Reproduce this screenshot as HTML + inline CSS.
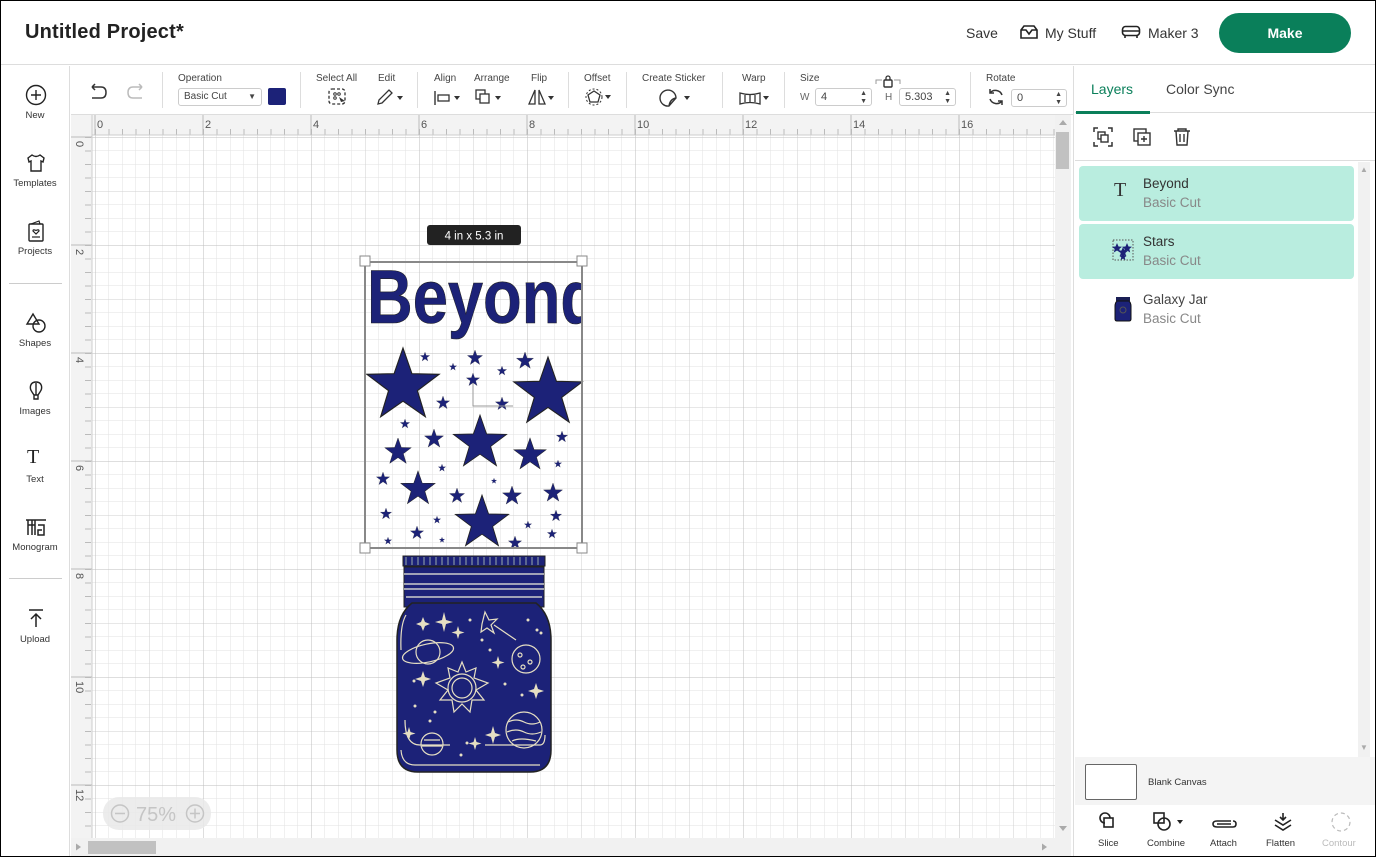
<!DOCTYPE html>
<html><head><meta charset="utf-8"><style>
*{box-sizing:border-box;margin:0;padding:0}
body{width:1376px;height:857px;overflow:hidden;background:#fff;font-family:"Liberation Sans",sans-serif;color:#333;position:relative}
.abs{position:absolute}
.frame{position:absolute;left:0;top:0;width:1376px;height:857px;border:1px solid #000;pointer-events:none;z-index:50}
.lbl{font-size:10px;color:#444;position:absolute;white-space:nowrap}
.side{font-size:9.5px;color:#333;position:absolute;width:70px;text-align:center;left:0}
.sep{position:absolute;width:1px;background:#ddd;top:72px;height:36px}
.inp{position:absolute;border:1px solid #ccc;border-radius:3px;background:#fff;font-size:11px;color:#444;padding-left:5px;line-height:16px;height:18px}
</style></head><body>
<div class="frame"></div>
<div class="abs" style="left:0;top:0;width:1376px;height:65px;border-bottom:1px solid #ddd;background:#fff"></div>
<div class="abs" style="left:25px;top:21px;font-size:20px;font-weight:bold;color:#222;letter-spacing:0.2px">Untitled Project*</div>
<div class="abs" style="left:966px;top:25px;font-size:14px;color:#333">Save</div>
<svg class="abs" style="left:1019px;top:24px" width="20" height="16" viewBox="0 0 20 16"><path d="M2 6 L2 14 L18 14 L18 6 L15 2 L5 2 Z M2 6 L7 6 L10 10 L13 6 L18 6" fill="none" stroke="#222" stroke-width="1.6"/></svg>
<div class="abs" style="left:1045px;top:25px;font-size:14px;color:#333">My Stuff</div>
<svg class="abs" style="left:1121px;top:25px" width="20" height="14" viewBox="0 0 20 14"><rect x="1.5" y="1.5" width="17" height="9" rx="3" fill="none" stroke="#222" stroke-width="1.6"/><path d="M1.5 6 H18.5 M4 10.5 V13 M16 10.5 V13" stroke="#222" stroke-width="1.6"/></svg>
<div class="abs" style="left:1148px;top:25px;font-size:14px;color:#333">Maker 3</div>
<div class="abs" style="left:1219px;top:13px;width:132px;height:40px;border-radius:20px;background:#0a7f5a;color:#fff;font-size:14px;font-weight:bold;text-align:center;line-height:40px">Make</div>

<div class="abs" style="left:0;top:66px;width:70px;height:791px;border-right:1px solid #ddd;background:#fff"></div>
<svg class="abs" style="left:25px;top:84px" width="22" height="22" viewBox="0 0 22 22"><circle cx="11" cy="11" r="9.5" fill="none" stroke="#222" stroke-width="1.4"/><path d="M11 6V16M6 11H16" stroke="#222" stroke-width="1.4"/></svg>
<div class="side" style="top:110px">New</div>
<svg class="abs" style="left:26px;top:153px" width="20" height="20" viewBox="0 0 20 20"><path d="M6 2 L2 5 L3 9 L5 8 L5 18 L15 18 L15 8 L17 9 L18 5 L14 2 Q10 5 6 2Z" fill="none" stroke="#222" stroke-width="1.4"/></svg>
<div class="side" style="top:178px">Templates</div>
<svg class="abs" style="left:27px;top:220px" width="18" height="22" viewBox="0 0 18 22"><rect x="2" y="4" width="14" height="17" rx="1" fill="none" stroke="#222" stroke-width="1.4"/><path d="M4 4 L12 1 L13 4" fill="none" stroke="#222" stroke-width="1.2"/><path d="M9 14 L6 11 Q6 9 9 10.5 Q12 9 12 11Z" fill="none" stroke="#222" stroke-width="1.2"/><path d="M5 17H13" stroke="#222" stroke-width="1.2"/></svg>
<div class="side" style="top:246px">Projects</div>
<div class="abs" style="left:9px;top:283px;width:53px;height:1px;background:#ccc"></div>
<svg class="abs" style="left:25px;top:312px" width="22" height="22" viewBox="0 0 22 22"><path d="M8 2 L2 12 L14 12Z" fill="none" stroke="#222" stroke-width="1.4"/><circle cx="14" cy="14" r="6" fill="none" stroke="#222" stroke-width="1.4"/></svg>
<div class="side" style="top:338px">Shapes</div>
<svg class="abs" style="left:27px;top:380px" width="18" height="22" viewBox="0 0 18 22"><path d="M9 2 C3 2 2 8 5 12 L7 15 H11 L13 12 C16 8 15 2 9 2Z M7 15 V19 H11 V15 M9 3 V15" fill="none" stroke="#222" stroke-width="1.4"/></svg>
<div class="side" style="top:406px">Images</div>
<div class="abs" style="left:27px;top:446px;font-family:'Liberation Serif',serif;font-size:20px;color:#222">T</div>
<div class="side" style="top:474px">Text</div>
<svg class="abs" style="left:24px;top:517px" width="24" height="20" viewBox="0 0 24 20"><path d="M2 3 H22 M4 3 V18 M8 3 V18 M4 8 H11 M11 3 V18 M14 8 H20 V18 H14 V13 H18" fill="none" stroke="#222" stroke-width="1.5"/></svg>
<div class="side" style="top:542px">Monogram</div>
<div class="abs" style="left:9px;top:578px;width:53px;height:1px;background:#ccc"></div>
<svg class="abs" style="left:27px;top:608px" width="18" height="20" viewBox="0 0 18 20"><path d="M2 2 H16 M9 6 V19 M4 11 L9 6 L14 11" fill="none" stroke="#222" stroke-width="1.5"/></svg>
<div class="side" style="top:634px">Upload</div>

<div class="abs" style="left:71px;top:66px;width:1003px;height:49px;background:#fff;border-bottom:1px solid #ddd"></div>
<svg class="abs" style="left:87px;top:83px" width="60" height="18" viewBox="0 0 60 18"><path d="M5 4 H14 Q19 4 19 9.5 Q19 15 14 15 H5 M5 4 L8 1 M5 4 L8 7" fill="none" stroke="#333" stroke-width="1.5"/><path d="M55 4 H46 Q41 4 41 9.5 Q41 15 46 15 H55 M55 4 L52 1 M55 4 L52 7" fill="none" stroke="#bbb" stroke-width="1.5"/></svg>
<div class="sep" style="left:162px"></div>
<div class="lbl" style="left:178px;top:73px">Operation</div>
<div class="inp" style="left:178px;top:88px;width:84px;font-size:10px">Basic Cut<span style="position:absolute;right:5px;font-size:8px">▼</span></div>
<div class="abs" style="left:268px;top:88px;width:18px;height:17px;background:#1c2278;border-radius:2px"></div>
<div class="sep" style="left:300px"></div>
<div class="lbl" style="left:316px;top:73px">Select All</div>
<svg class="abs" style="left:328px;top:88px" width="20" height="18" viewBox="0 0 20 18"><rect x="1" y="1" width="16" height="15" rx="3" fill="none" stroke="#333" stroke-width="1.3" stroke-dasharray="3 2"/><circle cx="7" cy="6" r="1.3" fill="none" stroke="#333"/><circle cx="11" cy="6" r="1.3" fill="none" stroke="#333"/><circle cx="7" cy="10" r="1.3" fill="none" stroke="#333"/><path d="M11 9 L17 13 L13 14Z" fill="#333"/></svg>
<div class="lbl" style="left:378px;top:73px">Edit</div>
<svg class="abs" style="left:376px;top:88px" width="28" height="18" viewBox="0 0 28 18"><path d="M2 16 L3 12 L13 2 L16 5 L6 15Z" fill="none" stroke="#333" stroke-width="1.3"/><path d="M21 8 H27 L24 12Z" fill="#333"/></svg>
<div class="sep" style="left:417px"></div>
<div class="lbl" style="left:434px;top:73px">Align</div>
<svg class="abs" style="left:434px;top:90px" width="28" height="16" viewBox="0 0 28 16"><path d="M1 1 V15" stroke="#333" stroke-width="1.4"/><rect x="4" y="5" width="11" height="6" fill="none" stroke="#333" stroke-width="1.3"/><path d="M20 6 H26 L23 10Z" fill="#333"/></svg>
<div class="lbl" style="left:474px;top:73px">Arrange</div>
<svg class="abs" style="left:475px;top:89px" width="30" height="17" viewBox="0 0 30 17"><rect x="1" y="1" width="9" height="9" fill="none" stroke="#333" stroke-width="1.3"/><rect x="5" y="5" width="9" height="9" fill="#fff" stroke="#333" stroke-width="1.3"/><path d="M20 7 H26 L23 11Z" fill="#333"/></svg>
<div class="lbl" style="left:531px;top:73px">Flip</div>
<svg class="abs" style="left:527px;top:88px" width="30" height="18" viewBox="0 0 30 18"><path d="M8 2 L2 16 H8Z M12 2 L18 16 H12Z" fill="none" stroke="#333" stroke-width="1.3"/><path d="M21 8 H27 L24 12Z" fill="#333"/></svg>
<div class="sep" style="left:568px"></div>
<div class="lbl" style="left:584px;top:73px">Offset</div>
<svg class="abs" style="left:585px;top:88px" width="30" height="18" viewBox="0 0 30 18"><path d="M9 3 L15 7 L13 14 H5 L3 7Z" fill="none" stroke="#333" stroke-width="1.3"/><circle cx="9" cy="9" r="8" fill="none" stroke="#333" stroke-width="1" stroke-dasharray="2 2"/><path d="M20 7 H26 L23 11Z" fill="#333"/></svg>
<div class="sep" style="left:626px"></div>
<div class="lbl" style="left:642px;top:73px">Create Sticker</div>
<svg class="abs" style="left:659px;top:88px" width="34" height="20" viewBox="0 0 34 20"><path d="M17 10 A8 8 0 1 0 10 18 L17 10Z M10 18 Q11 11 17 10" fill="none" stroke="#333" stroke-width="1.4"/><path d="M25 8 H31 L28 12Z" fill="#333"/></svg>
<div class="sep" style="left:722px"></div>
<div class="lbl" style="left:742px;top:73px">Warp</div>
<svg class="abs" style="left:739px;top:90px" width="32" height="16" viewBox="0 0 32 16"><path d="M1 3 Q11 6 21 3 V14 Q11 11 1 14Z M6 5 V12 M11 5 V12 M16 5 V12" fill="none" stroke="#333" stroke-width="1.3"/><path d="M24 6 H30 L27 10Z" fill="#333"/></svg>
<div class="sep" style="left:784px"></div>
<div class="lbl" style="left:800px;top:73px">Size</div>
<div class="lbl" style="left:800px;top:92px;color:#666;font-size:10px">W</div>
<div class="inp" style="left:815px;top:88px;width:57px">4<span style="position:absolute;right:4px;font-size:7px;line-height:8px;top:1px">▲<br>▼</span></div>
<svg class="abs" style="left:873px;top:74px" width="30" height="14" viewBox="0 0 30 14"><path d="M3 10 V6 H9 M21 6 H27 V10" fill="none" stroke="#999" stroke-width="1"/><rect x="11" y="6" width="8" height="7" rx="1" fill="none" stroke="#333" stroke-width="1.4"/><path d="M13 6 V4 A2 2 0 0 1 17 4 V6" fill="none" stroke="#333" stroke-width="1.3"/></svg>
<div class="lbl" style="left:885px;top:92px;color:#666">H</div>
<div class="inp" style="left:899px;top:88px;width:57px">5.303<span style="position:absolute;right:4px;font-size:7px;line-height:8px;top:1px">▲<br>▼</span></div>
<div class="sep" style="left:970px"></div>
<div class="lbl" style="left:986px;top:73px">Rotate</div>
<svg class="abs" style="left:987px;top:88px" width="18" height="18" viewBox="0 0 18 18"><path d="M15 7 A7 7 0 0 0 3 5 M3 11 A7 7 0 0 0 15 13" fill="none" stroke="#333" stroke-width="1.5"/><path d="M3 1 V5 H7 M15 17 V13 H11" fill="none" stroke="#333" stroke-width="1.5"/></svg>
<div class="inp" style="left:1011px;top:89px;width:56px">0<span style="position:absolute;right:4px;font-size:7px;line-height:8px;top:1px">▲<br>▼</span></div>

<svg class="abs" style="left:71px;top:115px" width="1003" height="742" viewBox="71 115 1003 742">
<defs>
<pattern id="minor" x="95" y="137" width="13.5" height="13.5" patternUnits="userSpaceOnUse"><path d="M0 0 V13.5 M0 0 H13.5" stroke="#e2e2e2" stroke-width="1"/></pattern>
<pattern id="major" x="95" y="137" width="54" height="54" patternUnits="userSpaceOnUse"><path d="M0 0 V54 M0 0 H54" stroke="#cfcfcf" stroke-width="1"/></pattern>
<pattern id="major2" x="95" y="137" width="108" height="108" patternUnits="userSpaceOnUse"><path d="M0 0 V108 M0 0 H108" stroke="#bdbdbd" stroke-width="1"/></pattern>
<pattern id="rtickx" x="95" y="115" width="13.5" height="20" patternUnits="userSpaceOnUse"><path d="M0.5 14 V20" stroke="#bbb"/></pattern>
<pattern id="rticky" x="71" y="137" width="20" height="13.5" patternUnits="userSpaceOnUse"><path d="M14 0.5 H20" stroke="#bbb"/></pattern>
<path id="st" d="M0,-1 L.235,-.324 L.951,-.309 L.38,.124 L.588,.809 L0,.4 L-.588,.809 L-.38,.124 L-.951,-.309 L-.235,-.324Z"/>
</defs>
<rect x="92" y="135" width="963" height="703" fill="#fff"/>
<rect x="92" y="135" width="963" height="703" fill="url(#minor)"/>
<rect x="92" y="135" width="963" height="703" fill="url(#major)"/>
<rect x="92" y="135" width="963" height="703" fill="url(#major2)"/>
<rect x="71" y="115" width="984" height="20" fill="#f3f3f3"/>
<rect x="92" y="115" width="963" height="20" fill="url(#rtickx)"/>
<rect x="71" y="135" width="21" height="703" fill="#f3f3f3"/>
<rect x="71" y="135" width="21" height="703" fill="url(#rticky)"/>
<path d="M92 135 H1055 M92 115 V838" stroke="#ccc"/>
<g stroke="#bbb"><path d="M95 115 V135 M203 115 V135 M311 115 V135 M419 115 V135 M527 115 V135 M635 115 V135 M743 115 V135 M851 115 V135 M959 115 V135"/>
<path d="M71 137 H92 M71 245 H92 M71 353 H92 M71 461 H92 M71 569 H92 M71 677 H92 M71 785 H92"/></g>
<g font-size="11" fill="#555" font-family="Liberation Sans">
<text x="97" y="128">0</text><text x="205" y="128">2</text><text x="313" y="128">4</text><text x="421" y="128">6</text><text x="529" y="128">8</text><text x="637" y="128">10</text><text x="745" y="128">12</text><text x="853" y="128">14</text><text x="961" y="128">16</text>
<g transform="rotate(90)"><text x="141" y="-76">0</text><text x="249" y="-76">2</text><text x="357" y="-76">4</text><text x="465" y="-76">6</text><text x="573" y="-76">8</text><text x="681" y="-76">10</text><text x="789" y="-76">12</text></g>
</g>
<svg x="365" y="260" width="217" height="80" viewBox="365 260 217 80" overflow="hidden">
<text x="367" y="323" font-family="Liberation Sans" font-weight="bold" font-size="76" fill="#1c2278" stroke="#222" stroke-width="0.6" textLength="232" lengthAdjust="spacingAndGlyphs">Beyond</text>
</svg>
<g fill="#1c2278" stroke="#222" stroke-width="0.03">
<use href="#st" transform="translate(403,386) scale(38)"/>
<use href="#st" transform="translate(548,393) scale(36)"/>
<use href="#st" transform="translate(480,443) scale(28)"/>
<use href="#st" transform="translate(482,523) scale(28)"/>
<use href="#st" transform="translate(398,452) scale(14)"/>
<use href="#st" transform="translate(418,489) scale(18)"/>
<use href="#st" transform="translate(530,455) scale(17)"/>
<use href="#st" transform="translate(434,439) scale(10)"/>
<use href="#st" transform="translate(553,493) scale(10)"/>
<use href="#st" transform="translate(512,496) scale(10)"/>
<use href="#st" transform="translate(457,496) scale(8)"/>
<use href="#st" transform="translate(475,358) scale(8)"/>
<use href="#st" transform="translate(525,361) scale(9)"/>
<use href="#st" transform="translate(473,380) scale(7)"/>
<use href="#st" transform="translate(443,403) scale(7)"/>
<use href="#st" transform="translate(502,404) scale(7)"/>
<use href="#st" transform="translate(425,357) scale(5)"/>
<use href="#st" transform="translate(453,367) scale(4)"/>
<use href="#st" transform="translate(502,371) scale(5)"/>
<use href="#st" transform="translate(405,424) scale(5)"/>
<use href="#st" transform="translate(562,437) scale(6)"/>
<use href="#st" transform="translate(558,464) scale(4)"/>
<use href="#st" transform="translate(442,468) scale(4)"/>
<use href="#st" transform="translate(383,479) scale(7)"/>
<use href="#st" transform="translate(494,481) scale(3)"/>
<use href="#st" transform="translate(386,514) scale(6)"/>
<use href="#st" transform="translate(437,520) scale(4)"/>
<use href="#st" transform="translate(556,516) scale(6)"/>
<use href="#st" transform="translate(528,525) scale(4)"/>
<use href="#st" transform="translate(417,533) scale(7)"/>
<use href="#st" transform="translate(552,534) scale(5)"/>
<use href="#st" transform="translate(515,543) scale(7)"/>
<use href="#st" transform="translate(388,541) scale(4)"/>
<use href="#st" transform="translate(442,540) scale(3)"/>
</g>
<path d="M473 383 V406 H513" stroke="#999" fill="none" stroke-width="1"/>
<rect x="365" y="262" width="217" height="286" fill="none" stroke="#888" stroke-width="2"/>
<g fill="#fff" stroke="#888" stroke-width="1"><rect x="360" y="256" width="10" height="10"/><rect x="577" y="256" width="10" height="10"/><rect x="360" y="543" width="10" height="10"/><rect x="577" y="543" width="10" height="10"/></g>
<rect x="427" y="225" width="94" height="20" rx="3" fill="#222"/>
<text x="474" y="239.5" text-anchor="middle" font-size="11.5" fill="#fff" font-family="Liberation Sans">4  in x 5.3  in</text>
<g>
<rect x="403" y="556" width="142" height="10" fill="#1c2278" stroke="#222"/>
<path d="M406 557 V565 M412 557 V565 M418 557 V565 M424 557 V565 M430 557 V565 M436 557 V565 M442 557 V565 M448 557 V565 M454 557 V565 M460 557 V565 M466 557 V565 M472 557 V565 M478 557 V565 M484 557 V565 M490 557 V565 M496 557 V565 M502 557 V565 M508 557 V565 M514 557 V565 M520 557 V565 M526 557 V565 M532 557 V565 M538 557 V565" stroke="#9aa" stroke-width="1"/>
<rect x="404" y="567" width="140" height="40" fill="#1c2278" stroke="#222"/>
<path d="M404 574 H544 M404 584 H544 M404 589 H544 M406 597 H542" stroke="#ccc" stroke-width="1.5"/>
<path d="M412 603 H536 Q551 615 551 640 V750 Q551 772 530 772 H418 Q397 772 397 750 V640 Q397 615 412 603Z" fill="#1c2278" stroke="#222" stroke-width="1.5"/>
<g fill="none" stroke="#e6dfc3" stroke-width="1.2">
<path d="M406 615 Q400 625 401 650 M401 750 Q402 765 415 765 H540 M405 720 Q405 745 420 745 H450 M485 745 H540 Q545 745 545 735"/>
<ellipse cx="428" cy="653" rx="26" ry="9" transform="rotate(-12 428 653)"/>
<circle cx="428" cy="652" r="12"/>
<circle cx="462" cy="688" r="14"/><circle cx="462" cy="688" r="10"/>
<path d="M462 662 L466 672 L476 668 L474 678 L488 683 L476 690 L484 700 L472 700 L470 712 L462 704 L454 712 L452 700 L440 700 L448 690 L436 683 L450 678 L448 668 L458 672Z"/>
<circle cx="526" cy="659" r="14"/><circle cx="520" cy="655" r="2"/><circle cx="530" cy="662" r="2"/><circle cx="523" cy="667" r="2"/>
<circle cx="524" cy="730" r="18"/><path d="M508 722 Q516 718 524 722 T540 722 M507 732 Q516 728 524 732 T541 732 M512 741 Q520 737 536 741"/>
<circle cx="432" cy="744" r="11"/><path d="M424 740 L440 740 M422 746 L442 746"/>
<path d="M485 612 L489 620 L497 619 L491 625 L494 633 L487 628 L481 632 L482 624Z M494 625 L516 640"/>
</g>
<g fill="#e6dfc3">
<path d="M423 617 l2 5 l5 2 l-5 2 l-2 5 l-2 -5 l-5 -2 l5 -2z"/>
<path d="M444 612 l2 8 l7 2 l-7 2 l-2 8 l-2 -8 l-7 -2 l7 -2z"/>
<path d="M458 626 l1.5 5 l5 1.5 l-5 1.5 l-1.5 5 l-1.5 -5 l-5 -1.5 l5 -1.5z"/>
<path d="M423 671 l2 6 l6 2 l-6 2 l-2 6 l-2 -6 l-6 -2 l6 -2z"/>
<path d="M498 656 l1.5 5 l5 1.5 l-5 1.5 l-1.5 5 l-1.5 -5 l-5 -1.5 l5 -1.5z"/>
<path d="M536 683 l2 6 l6 2 l-6 2 l-2 6 l-2 -6 l-6 -2 l6 -2z"/>
<path d="M493 726 l2 7 l6 2 l-6 2 l-2 7 l-2 -7 l-6 -2 l6 -2z"/>
<path d="M475 737 l1.5 5 l5 1.5 l-5 1.5 l-1.5 5 l-1.5 -5 l-5 -1.5 l5 -1.5z"/>
<path d="M409 727 l1.5 5 l5 1.5 l-5 1.5 l-1.5 5 l-1.5 -5 l-5 -1.5 l5 -1.5z"/>
<circle cx="470" cy="620" r="1.5"/><circle cx="528" cy="620" r="1.5"/><circle cx="482" cy="640" r="1.5"/><circle cx="490" cy="650" r="1.5"/><circle cx="414" cy="681" r="1.5"/><circle cx="415" cy="706" r="1.5"/><circle cx="435" cy="712" r="1.5"/><circle cx="430" cy="721" r="1.5"/><circle cx="505" cy="684" r="1.5"/><circle cx="522" cy="695" r="1.5"/><circle cx="467" cy="743" r="1.5"/><circle cx="461" cy="755" r="1.5"/><circle cx="537" cy="630" r="1.5"/><circle cx="541" cy="633" r="1.5"/></g>
</g>
<rect x="103" y="797" width="108" height="33" rx="16" fill="#e9e9e9" opacity="0.85"/>
<circle cx="120" cy="813.5" r="8.5" fill="none" stroke="#c5c5c5" stroke-width="1.5"/><path d="M115 813.5 H125" stroke="#c5c5c5" stroke-width="1.5"/>
<text x="136" y="821" font-size="20" fill="#c5c5c5" font-family="Liberation Sans">75%</text>
<circle cx="195" cy="813.5" r="8.5" fill="none" stroke="#c5c5c5" stroke-width="1.5"/><path d="M190 813.5 H200 M195 808.5 V818.5" stroke="#c5c5c5" stroke-width="1.5"/>
<rect x="1055" y="115" width="16" height="742" fill="#f1f1f1"/>
<path d="M1059 125 H1067 L1063 120Z" fill="#aaa"/>
<rect x="1056" y="132" width="13" height="37" fill="#c1c1c1"/>
<path d="M1059 826 H1067 L1063 831Z" fill="#aaa"/>
<rect x="71" y="838" width="984" height="19" fill="#f1f1f1"/>
<path d="M81 847 L76 843.5 V850.5Z" fill="#aaa"/>
<rect x="88" y="841" width="68" height="13" fill="#c1c1c1"/>
<path d="M1042 843.5 L1047 847 L1042 850.5Z" fill="#aaa"/>
</svg>

<div class="abs" style="left:1073px;top:66px;width:303px;height:791px;background:#fff;border-left:1px solid #ddd"></div>
<div class="abs" style="left:1091px;top:81px;font-size:14px;color:#0a7f5a">Layers</div>
<div class="abs" style="left:1166px;top:81px;font-size:14px;color:#444">Color Sync</div>
<div class="abs" style="left:1075px;top:112px;width:301px;height:1px;background:#ddd"></div>
<div class="abs" style="left:1076px;top:111px;width:74px;height:3px;background:#0a7f5a"></div>
<svg class="abs" style="left:1093px;top:127px" width="110" height="22" viewBox="0 0 110 22"><path d="M1 5 V1 H5 M15 1 H19 V5 M19 15 V19 H15 M5 19 H1 V15" fill="none" stroke="#333" stroke-width="1.5"/><rect x="5" y="5" width="7" height="7" fill="none" stroke="#333" stroke-width="1.4"/><rect x="8" y="8" width="7" height="7" fill="#fff" stroke="#333" stroke-width="1.4"/>
<rect x="41" y="2" width="12" height="12" fill="none" stroke="#333" stroke-width="1.4"/><rect x="45" y="6" width="12" height="12" fill="#fff" stroke="#333" stroke-width="1.4"/><path d="M51 9 V15 M48 12 H54" stroke="#333" stroke-width="1.4"/>
<path d="M81 4 H97 M85 4 V2 H93 V4 M83 4 L84 18 H94 L95 4 M87 7 V15 M91 7 V15" fill="none" stroke="#333" stroke-width="1.4"/></svg>
<div class="abs" style="left:1075px;top:160px;width:301px;height:1px;background:#ddd"></div>
<div class="abs" style="left:1358px;top:162px;width:12px;height:595px;background:#f1f1f1"></div>
<div class="abs" style="left:1360px;top:165px;font-size:8px;color:#aaa">▲</div>
<div class="abs" style="left:1360px;top:743px;font-size:8px;color:#aaa">▼</div>
<div class="abs" style="left:1079px;top:166px;width:275px;height:55px;background:#b9eddf;border-radius:4px"></div>
<div class="abs" style="left:1079px;top:224px;width:275px;height:55px;background:#b9eddf;border-radius:4px"></div>
<div class="abs" style="left:1114px;top:179px;font-family:'Liberation Serif',serif;font-size:20px;color:#333">T</div>
<div class="abs" style="left:1143px;top:176px;font-size:13.5px;color:#333">Beyond</div>
<div class="abs" style="left:1143px;top:195px;font-size:13.5px;color:#888">Basic Cut</div>
<svg class="abs" style="left:1112px;top:239px" width="22" height="22" viewBox="0 0 22 22">
<rect x="1" y="1" width="20" height="20" fill="none" stroke="#555" stroke-width="1" stroke-dasharray="1.5 1.5"/>
<path d="M5 3 l1.5 3.5 l3.5 .3 l-2.7 2.2 l.9 3.5 l-3.2 -2 l-3.2 2 l.9 -3.5 l-2.7 -2.2 l3.5 -.3z" fill="#1c2278" transform="translate(0,1)"/>
<path d="M16 3 l1.5 3.5 l3.5 .3 l-2.7 2.2 l.9 3.5 l-3.2 -2 l-3.2 2 l.9 -3.5 l-2.7 -2.2 l3.5 -.3z" fill="#1c2278" transform="translate(-1,1)"/>
<path d="M11 8 l1.5 3.5 l3.5 .3 l-2.7 2.2 l.9 3.5 l-3.2 -2 l-3.2 2 l.9 -3.5 l-2.7 -2.2 l3.5 -.3z" fill="#1c2278"/>
<path d="M11 14 l1.2 2.5 l2.5 .3 l-2 1.6 l.7 2.6 l-2.4 -1.4 l-2.4 1.4 l.7 -2.6 l-2 -1.6 l2.5 -.3z" fill="#1c2278"/></svg>
<div class="abs" style="left:1143px;top:234px;font-size:13.5px;color:#333">Stars</div>
<div class="abs" style="left:1143px;top:253px;font-size:13.5px;color:#888">Basic Cut</div>
<svg class="abs" style="left:1114px;top:296px" width="18" height="26" viewBox="0 0 18 26"><rect x="2" y="1" width="14" height="4" fill="#1a1f55"/><path d="M3 5 H15 Q17 7 17 10 V23 Q17 25 15 25 H3 Q1 25 1 23 V10 Q1 7 3 5Z" fill="#1c2278" stroke="#111"/><circle cx="9" cy="14" r="3" fill="none" stroke="#555"/></svg>
<div class="abs" style="left:1143px;top:292px;font-size:13.5px;color:#444">Galaxy Jar</div>
<div class="abs" style="left:1143px;top:311px;font-size:13.5px;color:#888">Basic Cut</div>
<div class="abs" style="left:1075px;top:757px;width:301px;height:48px;background:#f4f4f4"></div>
<div class="abs" style="left:1085px;top:764px;width:52px;height:36px;background:#fff;border:1px solid #666;border-radius:2px"></div>
<div class="abs" style="left:1148px;top:777px;font-size:9.5px;color:#333">Blank Canvas</div>
<svg class="abs" style="left:1097px;top:811px" width="260" height="24" viewBox="0 0 260 24"><g fill="none" stroke="#222" stroke-width="1.6">
<path d="M8 12 A5 5 0 1 1 13 7"/><rect x="7" y="7" width="9" height="9"/>
<rect x="57" y="2" width="10" height="10"/><circle cx="67" cy="13" r="6"/>
<path d="M134 10 H120 Q116 10 116 13 Q116 16 120 16 H136 Q139 16 139 13 Q139 10 136 10 M134 13 H120"/>
<path d="M186 2 V9 M183 6 L186 9 L189 6 M178 9 L186 14 L194 9 M178 14 L186 19 L194 14"/>
</g><path d="M80 9 H86 L83 13Z" fill="#222"/>
<circle cx="244" cy="11" r="9" fill="none" stroke="#bbb" stroke-width="1.2" stroke-dasharray="4 3"/></svg>
<div class="abs" style="left:1098px;top:838px;font-size:9.5px;color:#333">Slice</div>
<div class="abs" style="left:1147px;top:838px;font-size:9.5px;color:#333">Combine</div>
<div class="abs" style="left:1210px;top:838px;font-size:9.5px;color:#333">Attach</div>
<div class="abs" style="left:1266px;top:838px;font-size:9.5px;color:#333">Flatten</div>
<div class="abs" style="left:1322px;top:838px;font-size:9.5px;color:#bbb">Contour</div>
</body></html>
